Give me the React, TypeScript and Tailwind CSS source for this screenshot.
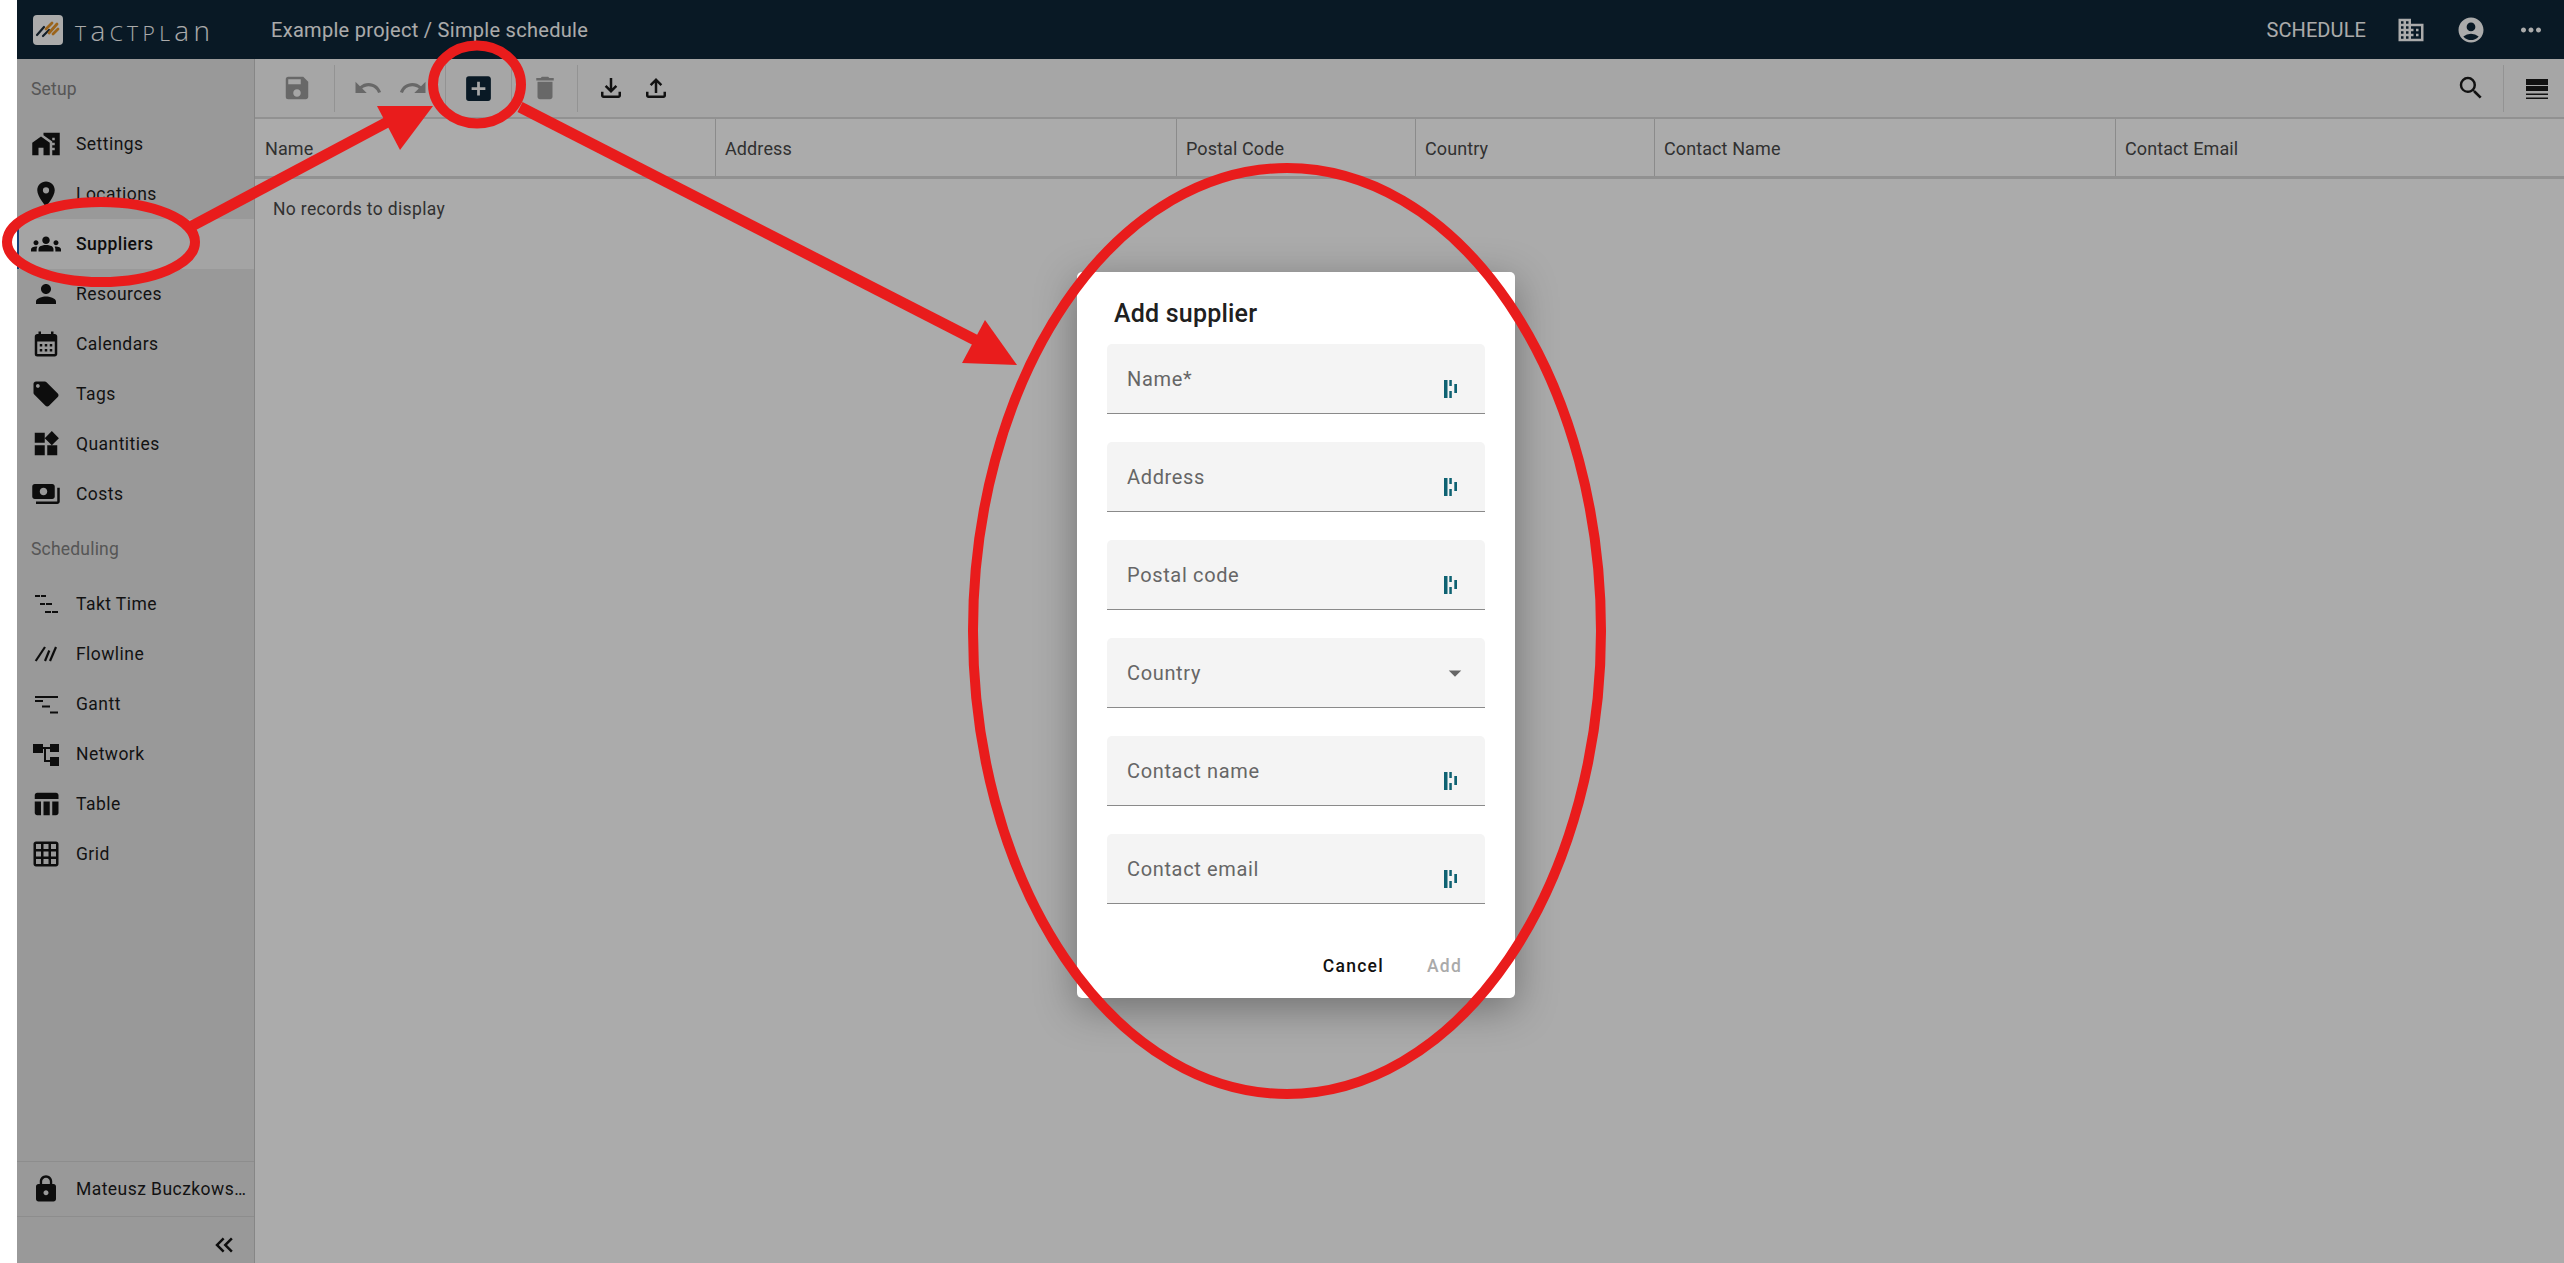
import {
  MdAccountCircle,
  MdAddBox,
  MdArrowDropDown,
  MdCalendarMonth,
  MdDelete,
  MdDomain,
  MdGridOn,
  MdGroups,
  MdHomeWork,
  MdKeyboardDoubleArrowLeft,
  MdLocalOffer,
  MdLocationOn,
  MdLock,
  MdMoreHoriz,
  MdOutlineFileDownload,
  MdOutlineFileUpload,
  MdPayments,
  MdPerson,
  MdRedo,
  MdSave,
  MdSearch,
  MdTableChart,
  MdUndo,
  MdWidgets,
} from "react-icons/md";
import type { ReactNode } from "react";

function TaktIcon() {
  return (
    <svg viewBox="0 0 30 30" className="w-[30px] h-[30px]" fill="currentColor">
      <rect x="4" y="6" width="5" height="2" />
      <rect x="10" y="6" width="5" height="2" />
      <rect x="9" y="14" width="5" height="2" />
      <rect x="15" y="14" width="6" height="2" />
      <rect x="14" y="22" width="6" height="2" />
      <rect x="21" y="22" width="6" height="2" />
    </svg>
  );
}

function FlowlineIcon() {
  return (
    <svg viewBox="0 0 30 30" fill="none" stroke="currentColor" strokeWidth="2.2" className="w-[30px] h-[30px]">
      <path d="M4.7 22L14 8" />
      <path d="M14 22L18.3 11.5" />
      <path d="M19 22L25 8" />
    </svg>
  );
}

function GanttIcon() {
  return (
    <svg viewBox="0 0 30 30" className="w-[30px] h-[30px]" fill="currentColor">
      <rect x="4" y="7" width="23" height="2" />
      <rect x="4" y="11" width="8" height="2" />
      <rect x="11" y="16.5" width="8" height="2" />
      <rect x="19" y="22.5" width="8" height="2" />
    </svg>
  );
}

function NetworkIcon() {
  return (
    <svg viewBox="0 0 30 30" className="w-[30px] h-[30px]" fill="currentColor">
      <rect x="2" y="5" width="10" height="9" />
      <rect x="19" y="5" width="9" height="8" />
      <rect x="19" y="18" width="9" height="9" />
      <path d="M12 8h7v2h-4v11h4v2h-6V10h-1z" />
    </svg>
  );
}

function ColumnsIcon() {
  return (
    <svg viewBox="0 0 30 30" className="w-[30px] h-[30px]" fill="currentColor">
      <rect x="4" y="6" width="22" height="6" />
      <rect x="4" y="13" width="22" height="5" />
      <rect x="4" y="20.5" width="22" height="1.5" />
      <rect x="4" y="24.5" width="22" height="1.5" />
    </svg>
  );
}

function StrikeIcon() {
  return (
    <svg viewBox="0 0 14 18" className="w-[14px] h-[18px]" fill="#0e6272">
      <rect x="0" y="0" width="3.5" height="18" />
      <rect x="5.3" y="0" width="2.5" height="6" />
      <rect x="5.3" y="11" width="2.5" height="7" />
      <rect x="10.3" y="4" width="2.7" height="9" />
    </svg>
  );
}

function NavItem({ icon, label, active }: { icon: ReactNode; label: string; active?: boolean }) {
  return (
    <div
      className={
        active
          ? "h-[50px] flex items-center pl-[12px] border-l-[2px] border-[#1e5fb4] bg-[#f5f5f5] font-medium text-[#141414]"
          : "h-[50px] flex items-center pl-[14px] text-[#1c1c1c]"
      }
    >
      <span className="w-[30px] h-[30px] flex items-center justify-center text-[30px] text-[#141414]">{icon}</span>
      <span className="ml-[15px] text-[17.5px] tracking-[0.45px]">{label}</span>
    </div>
  );
}

function ToolButton({ children, muted }: { children: ReactNode; muted?: boolean }) {
  return (
    <button className={muted ? "w-[45px] h-[45px] flex items-center justify-center text-[30px] text-[#9c9c9c]" : "w-[45px] h-[45px] flex items-center justify-center text-[30px] text-[#1a1a1a]"}>
      {children}
    </button>
  );
}

function Sep() {
  return <div className="w-px h-[47px] mx-[10px] bg-[#dcdcdc]" />;
}

function Field({ label, select }: { label: string; select?: boolean }) {
  return (
    <div className="h-[70px] flex justify-between rounded-t-[5px] bg-[#f4f4f4] border-b-[1.5px] border-[#8a8a8a] pl-[20px]">
      <span className="mt-[25px] h-[20px] leading-[20px] text-[20px] tracking-[0.65px] text-[#666666]">{label}</span>
      {select ? (
        <span className="mt-[20px] mr-[15px] text-[30px] text-[#666666]">
          <MdArrowDropDown />
        </span>
      ) : (
        <span className="mt-[36px] mr-[27px]">
          <StrikeIcon />
        </span>
      )}
    </div>
  );
}

const columns = ["Name", "Address", "Postal Code", "Country", "Contact Name", "Contact Email"];

export default function App() {
  return (
    <div className="relative h-screen overflow-hidden bg-white pl-[17px] font-['Roboto',sans-serif]">
      <div className="h-full flex flex-col">
        <header className="h-[59px] shrink-0 flex items-center bg-[#0e2638] text-white">
          <div className="ml-[16px] w-[30px] h-[30px] rounded-[4px] bg-white">
            <svg viewBox="0 0 30 30" className="w-[30px] h-[30px]" fill="none" strokeLinecap="round">
              <path d="M4 20L11 12" stroke="#1c2d3c" strokeWidth="2.2" />
              <path d="M10 21L16 15" stroke="#1c2d3c" strokeWidth="2.2" />
              <path d="M13 14L19 8" stroke="#e8952a" strokeWidth="2.8" />
              <path d="M16 18L24 9" stroke="#e8952a" strokeWidth="2.8" />
              <path d="M20 19L25 14" stroke="#e8952a" strokeWidth="2.8" />
            </svg>
          </div>
          <span className="ml-[12px] w-[196px] flex items-baseline text-[21px] leading-none font-light tracking-[4.4px] font-['Open_Sans',sans-serif]">
            T<span className="text-[28px]">a</span>CTPL<span className="text-[28px]">an</span>
          </span>
          <span className="text-[20px] tracking-[0.3px]">Example project / Simple schedule</span>
          <span className="ml-auto text-[20px] tracking-[0.1px] mr-[30px]">SCHEDULE</span>
          <span className="text-[30px] mr-[30px]"><MdDomain /></span>
          <span className="text-[30px] mr-[30px]"><MdAccountCircle /></span>
          <span className="text-[30px] mr-[18px]"><MdMoreHoriz /></span>
        </header>

        <div className="flex-1 flex min-h-0">
          <aside className="w-[238px] shrink-0 flex flex-col bg-[#e4e4e4] border-r border-[#c8c8c8]">
            <div className="h-[60px] flex items-center pl-[14px] text-[17.5px] tracking-[0.2px] text-[#808080]">Setup</div>
            <NavItem icon={<MdHomeWork />} label="Settings" />
            <NavItem icon={<MdLocationOn />} label="Locations" />
            <NavItem icon={<MdGroups />} label="Suppliers" active />
            <NavItem icon={<MdPerson />} label="Resources" />
            <NavItem icon={<MdCalendarMonth />} label="Calendars" />
            <NavItem icon={<MdLocalOffer />} label="Tags" />
            <NavItem icon={<MdWidgets />} label="Quantities" />
            <NavItem icon={<MdPayments />} label="Costs" />
            <div className="h-[60px] flex items-center pl-[14px] text-[17.5px] tracking-[0.2px] text-[#808080]">Scheduling</div>
            <NavItem icon={<TaktIcon />} label="Takt Time" />
            <NavItem icon={<FlowlineIcon />} label="Flowline" />
            <NavItem icon={<GanttIcon />} label="Gantt" />
            <NavItem icon={<NetworkIcon />} label="Network" />
            <NavItem icon={<MdTableChart />} label="Table" />
            <NavItem icon={<MdGridOn />} label="Grid" />
            <div className="mt-auto h-[56px] flex items-center pl-[14px] border-y border-[#d2d2d2]">
              <span className="text-[30px] text-[#141414]"><MdLock /></span>
              <span className="ml-[15px] w-[172px] truncate text-[17.5px] tracking-[0.45px] text-[#1c1c1c]">Mateusz Buczkowski</span>
            </div>
            <div className="h-[46px] flex items-center justify-end pr-[15px] pt-[9px] text-[30px] text-[#141414]">
              <MdKeyboardDoubleArrowLeft />
            </div>
          </aside>

          <main className="flex-1 min-w-0 flex flex-col bg-white">
            <div className="h-[60px] shrink-0 flex items-center pl-[19px] pr-[5px] bg-[#f8f8f8] border-b-2 border-[#d8d8d8]">
              <ToolButton muted><MdSave /></ToolButton>
              <div className="w-[5px]" />
              <Sep />
              <ToolButton muted><MdUndo /></ToolButton>
              <ToolButton muted><MdRedo /></ToolButton>
              <Sep />
              <ToolButton><span className="text-[#0e2638] text-[33px]"><MdAddBox /></span></ToolButton>
              <Sep />
              <ToolButton muted><MdDelete /></ToolButton>
              <Sep />
              <ToolButton><MdOutlineFileDownload /></ToolButton>
              <ToolButton><MdOutlineFileUpload /></ToolButton>
              <div className="flex-1" />
              <ToolButton><MdSearch /></ToolButton>
              <Sep />
              <ToolButton><ColumnsIcon /></ToolButton>
            </div>
            <div className="h-[60px] shrink-0 grid grid-cols-[460px_461px_239px_239px_461px_1fr] border-b-[3px] border-[#d8d8d8] text-[18px] tracking-[0.1px] text-[#4a4a4a]">
              {columns.map((c, i) => (
                <div key={c} className={i === 0 ? "flex items-center pl-[10px] pt-[2px]" : "flex items-center pl-[9px] pt-[2px] border-l border-[#cfcfcf]"}>
                  {c}
                </div>
              ))}
            </div>
            <div className="pl-[18px] pt-[17px] text-[17.5px] tracking-[0.35px] text-[#4a4a4a]">No records to display</div>
          </main>
        </div>
      </div>

      {/* modal backdrop */}
      <div className="absolute inset-y-0 left-[17px] right-0 flex items-center justify-center pl-[11px] pt-[7px] bg-black/33">
        <div className="w-[438px] h-[726px] flex flex-col rounded-[5px] bg-white shadow-[0_10px_40px_rgba(0,0,0,0.35)]">
          <div className="h-[72px] pl-[37px] pt-[25px] leading-[34px] text-[25px] tracking-[0.2px] font-medium text-[#202020]">Add supplier</div>
          <div className="flex flex-col gap-[28px] px-[30px]">
            <Field label="Name*" />
            <Field label="Address" />
            <Field label="Postal code" />
            <Field label="Country" select />
            <Field label="Contact name" />
            <Field label="Contact email" />
          </div>
          <div className="mt-[31px] h-[62px] flex items-center justify-end gap-[43px] pr-[53px] text-[17.5px] font-medium tracking-[1.25px]">
            <span className="text-[#111111]">Cancel</span>
            <span className="text-[#aaaaaa]">Add</span>
          </div>
        </div>
      </div>

      {/* red annotation marks drawn on top of the screenshot */}
      <svg viewBox="0 0 2564 1263" className="absolute inset-0 w-full h-full pointer-events-none" fill="none" stroke="#e91c1c" strokeWidth="10">
        <ellipse cx="101" cy="242" rx="94" ry="40" />
        <ellipse cx="477" cy="84.5" rx="44" ry="39" />
        <ellipse cx="1287" cy="631" rx="314" ry="463" />
        <path d="M192 226L395 118" strokeWidth="11" />
        <path d="M377 106H433L400 150Z" fill="#e91c1c" stroke="none" />
        <path d="M520 107L985 345" strokeWidth="11" />
        <path d="M985 320L962 363L1017 365Z" fill="#e91c1c" stroke="none" />
      </svg>
    </div>
  );
}
